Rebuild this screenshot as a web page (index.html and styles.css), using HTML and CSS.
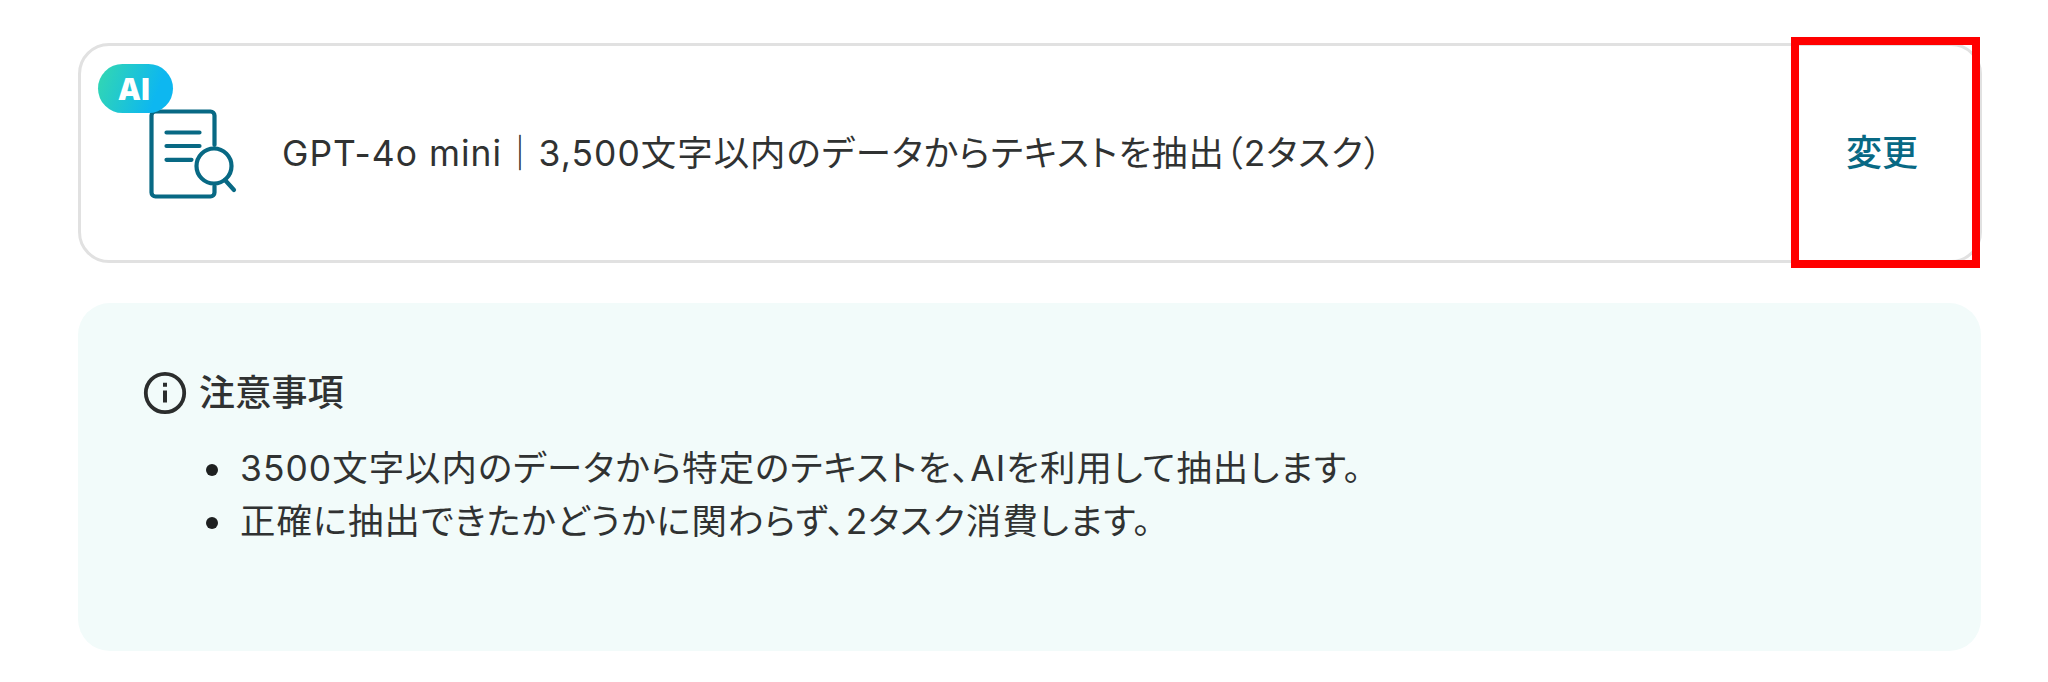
FILE: index.html
```html
<!DOCTYPE html>
<html lang="ja">
<head>
    <meta charset="UTF-8">
    <meta name="viewport" content="width=device-width, initial-scale=1.0">
    <title>GPT-4o mini</title>
    <link rel="stylesheet" href="styles.css">
</head>
<body>
    <div class="operation-card">
        <span class="ai-badge">AI</span>
        <svg class="doc-icon" width="90" height="96" viewBox="0 0 90 96" fill="none">
            <path d="M70.5 39V9.500a4 4 0 0 0-4-4h-55a4 4 0 0 0-4 4v77a4 4 0 0 0 4 4h55a4 4 0 0 0 4-4V80"/>
            <path d="M22.500 26.500h33M22.500 40h33M22.500 53.800h25"/>
            <circle cx="70" cy="60" r="17.500"/>
            <path d="M81 74l9 10"/>
        </svg>
        <p class="operation-name">GPT-4o mini｜3,500文字以内のデータからテキストを抽出（2タスク）</p>
        <a class="change-link">変更</a>
    </div>

    <div class="notes">
        <div class="notes-title">
            <svg width="44" height="44" viewBox="0 0 44 44">
                <circle cx="22" cy="22" r="19.200" fill="none" stroke="#2b2d2d" stroke-width="3.800"/>
                <path d="M20 11.700h4v4h-4zM20 19.500h4v12h-4z" fill="#2b2d2d"/>
            </svg>
            <h2>注意事項</h2>
        </div>
        <ul>
            <li><span>3500文字以内のデータから特定のテキストを、AIを利用して抽出します。</span></li>
            <li><span>正確に抽出できたかどうかに関わらず、2タスク消費します。</span></li>
        </ul>
    </div>
</body>
</html>
```

FILE: styles.css
```css
* {
    box-sizing: border-box;
}

body {
    margin: 0;
    padding: 43px 66px 0 78px;
    background: #fff;
    color: #303232;
    font-family: Inter, "Noto Sans CJK JP", sans-serif;
    font-feature-settings: "palt";
}

.operation-card {
    position: relative;
    display: flex;
    align-items: center;
    width: 1904px;
    height: 220px;
    padding-left: 63px;
    border: 3px solid #e1e1e1;
    border-radius: 31px;
}

.ai-badge {
    position: absolute;
    top: 18px;
    left: 17px;
    z-index: 1;
    width: 75px;
    height: 49px;
    border-radius: 25px;
    background: linear-gradient(110deg, #2fd4b8 10%, #0db7f0 75%);
    color: #fff;
    font-family: "Open Sans", sans-serif;
    font-size: 30px;
    font-weight: 800;
    line-height: 50px;
    text-align: center;
    text-indent: -2px;
}

.doc-icon {
    overflow: visible;
    margin-top: 2px;
    stroke: #086984;
    stroke-width: 4.200;
    stroke-linecap: round;
}

.operation-name {
    margin: 0 0 5px 48px;
    font-size: 35.400px;
    letter-spacing: 1.050px;
    white-space: nowrap;
}

/* highlighted area over the right end of the card */
.change-link {
    position: absolute;
    top: -9px;
    right: -1px;
    display: flex;
    align-items: center;
    justify-content: center;
    width: 189px;
    height: 231px;
    padding: 0 7px 5px 0;
    border: 8px solid #f00;
    color: #086984;
    font-size: 36px;
    font-weight: 500;
}

.notes {
    width: 1903px;
    height: 348px;
    margin-top: 40px;
    padding: 64px;
    border-radius: 32px;
    background: #f2fbfa;
}

.notes-title {
    display: flex;
    align-items: center;
    gap: 12px;
    height: 52px;
    padding-left: 1px;
}

.notes-title h2 {
    margin: 0 0 7px;
    font-size: 36px;
    font-weight: 500;
    letter-spacing: 0.200px;
}

.notes ul {
    margin: 24px 0 0;
    padding: 0;
    list-style: none;
}

.notes li {
    display: flex;
    align-items: center;
    height: 53px;
    padding-left: 64px;
    font-size: 35.400px;
    letter-spacing: 1.050px;
    white-space: nowrap;
}

.notes li::before {
    content: "";
    width: 12px;
    height: 12px;
    margin-right: 22px;
    border-radius: 50%;
    background: #1e2020;
}

.notes li span {
    margin-bottom: 8px;
}
```
